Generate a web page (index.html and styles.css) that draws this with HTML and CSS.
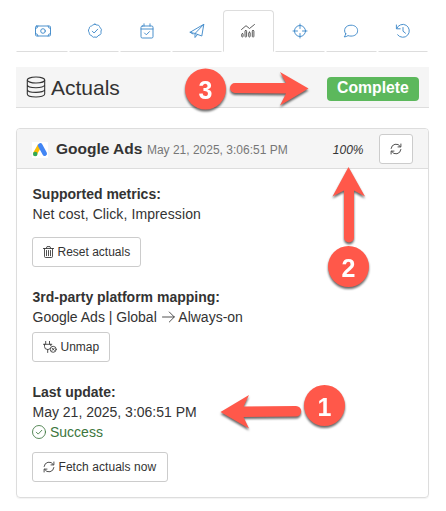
FILE: index.html
```html
<!DOCTYPE html>
<html lang="en">
<head>
    <meta charset="UTF-8">
    <meta name="viewport" content="width=device-width, initial-scale=1.0">
    <title>Actuals</title>
    <link rel="stylesheet" href="styles.css">
</head>
<body>
    <ul class="tabs">
        <li class="tab tab-wide">
            <svg class="icon" width="18" height="16" viewBox="0 0 18 16"><rect x="1.500" y="3" width="15" height="10" rx="1.200"/><circle cx="9" cy="8" r="2.300"/><path d="M1.500 5.500Q4 5.500 4 3M14 3Q14 5.500 16.500 5.500M1.500 10.500Q4 10.500 4 13M14 13Q14 10.500 16.500 10.500"/></svg>
        </li>
        <li class="tab tab-check">
            <svg class="icon" width="16" height="16" viewBox="0 0 16 16"><path d="M8 1.200Q9 2.300 10.200 2Q12 1.900 12.500 3.500Q12.700 4.800 13.900 5.400Q15 6.800 14 8Q14 9.200 14 10.500Q13.500 12 12 12.200Q10.800 12.700 10.200 13.900Q8.900 14.900 8 13.900Q6.600 14.800 5.600 13.800Q5.100 12.600 3.800 12.300Q2.200 11.700 2.300 10.300Q2.200 9.100 1.500 8.200Q1.200 6.800 2.200 5.700Q2.200 3.900 3.500 3.300Q4.800 3.100 5.600 2.200Q6.900 1.300 8 1.200Z"/><path d="M5.300 8.200L7.100 10L10.700 6.200"/></svg>
        </li>
        <li class="tab tab-check">
            <svg class="icon" width="16" height="16" viewBox="0 0 16 16"><rect x="2" y="3" width="12" height="12" rx="1.300"/><path d="M2 6H14M5 3V.8M11 3V.8M5.500 10L7.300 11.800L10.500 8.600"/></svg>
        </li>
        <li class="tab">
            <svg class="icon" width="16" height="16" viewBox="0 0 16 16"><path d="M1.200 9.200L14.800 1.300L12.800 13L6 10.500ZM14.800 1.300L6 10.500V14.500L8.500 11.500M1.200 9.200L4 11"/></svg>
        </li>
        <li class="tab active">
            <svg class="icon" width="16" height="16" viewBox="0 0 16 16"><path d="M1.500 6.500L6 2.700L9.500 5.500L14.500 1.500"/><rect x="1.700" y="10.500" width="1.400" height="3.500" rx=".7"/><rect x="5" y="7.500" width="1.600" height="6.500" rx=".7"/><rect x="8.700" y="9.200" width="1.500" height="4.800" rx=".7"/><rect x="12.300" y="7.500" width="1.600" height="6.500" rx=".7"/></svg>
        </li>
        <li class="tab">
            <svg class="icon" width="16" height="16" viewBox="0 0 16 16"><circle cx="8" cy="8" r="5.500"/><path d="M8 1V5.500M8 10.500V15M1 8H5.500M10.500 8H15"/></svg>
        </li>
        <li class="tab">
            <svg class="icon" width="16" height="16" viewBox="0 0 16 16"><path d="M2.700 10.800C-.2 7 2.500 2.200 8 2.200C12 2.200 14.600 4.500 14.600 7.700C14.600 11 12 13.100 8 13.100C6.900 13.100 5.900 12.900 5 12.600Q3.300 13.900 1.200 13.900Q2.400 12.600 2.700 10.800Z"/></svg>
        </li>
        <li class="tab">
            <svg class="icon" width="16" height="16" viewBox="0 0 16 16"><path d="M1.400 2V5.800H5.200M1.700 5.500A6.500 6.500 0 1 1 2.600 11.800M8 4.500V8.200L10.500 10.200"/></svg>
        </li>
    </ul>

    <div class="page-bar">
        <svg class="icon icon-db" width="20" height="22" viewBox="0 0 20 22"><ellipse cx="10" cy="4" rx="8.700" ry="3"/><path d="M1.300 4V18C1.300 22 18.700 22 18.700 18V4M1.300 8.800C1.300 12.800 18.700 12.800 18.700 8.800M1.300 13.400C1.300 17.400 18.700 17.400 18.700 13.400"/></svg>
        <h1>Actuals</h1>
        <span class="label">Complete</span>
    </div>

    <div class="panel">
        <div class="panel-heading">
            <svg class="ads-logo" width="16" height="16" viewBox="0 0 16 16"><rect width="16" height="16" fill="#fff"/><path d="M7.700 3.500L3 11.800" stroke="#fbbc04" stroke-width="4.200"/><path d="M8.200 3.400L12.700 11.700" stroke="#4285f4" stroke-width="4.600" stroke-linecap="round"/><circle cx="3.200" cy="12" r="2.300" fill="#34a853"/></svg>
            <h2>Google Ads</h2>
            <small>May 21, 2025, 3:06:51 PM</small>
            <em>100%</em>
            <button class="btn" aria-label="Refresh">
                <svg class="icon" width="12" height="12" viewBox="0 0 12 12"><path d="M1.100 5.500A5 5 0 0 1 10.300 3.500M10.900 1V3.900H8M10.900 6.500A5 5 0 0 1 1.700 8.500M1.100 11V8.100H4"/></svg>
            </button>
        </div>
        <div class="panel-body">
            <div class="block metrics">
                <strong>Supported metrics:</strong>
                <p class="spaced">Net cost, Click, Impression</p>
                <button class="btn">
                    <svg class="icon" width="11" height="12" viewBox="0 0 11 12"><path d="M.3 2.500H10.700M3.300 2.300L4 .6H7L7.700 2.300M1.500 2.500V10.400Q1.500 11.500 2.600 11.500H8.400Q9.500 11.500 9.500 10.400V2.500M3.500 4.500V9.700M5.500 4.500V9.700M7.500 4.500V9.700"/></svg>
                    Reset actuals
                </button>
            </div>
            <div class="block mapping">
                <strong>3rd-party platform mapping:</strong>
                <p>Google Ads | Global <svg class="icon icon-arrow" width="13" height="12" viewBox="0 0 13 12"><path d="M.5 6H12.300M7.300 1L12.300 6L7.300 11"/></svg> Always-on</p>
                <button class="btn">
                    <svg class="icon" width="14" height="12" viewBox="0 0 14 12"><path d="M2.700 .3V3M6.500 .3V3M.5 3.300H8.800M1.500 3.300V5.500Q1.500 8.500 4.700 8.500Q6 8.500 6.600 7.800M4.700 8.500V11.500M7.800 4.700V3.300"/><circle cx="10.200" cy="8.300" r="3"/><path d="M9.100 7.200L11.300 9.400M11.300 7.200L9.100 9.400"/></svg>
                    Unmap
                </button>
            </div>
            <div class="block update">
                <strong>Last update:</strong>
                <p>May 21, 2025, 3:06:51 PM</p>
                <p class="success"><svg class="icon" width="14" height="14" viewBox="0 0 14 14"><circle cx="7" cy="7" r="6.500"/><path d="M4.300 7.200L6.200 9.100L9.800 5.300"/></svg> Success</p>
                <button class="btn">
                    <svg class="icon" width="12" height="12" viewBox="0 0 12 12"><path d="M1.100 5.500A5 5 0 0 1 10.300 3.500M10.900 1V3.900H8M10.900 6.500A5 5 0 0 1 1.700 8.500M1.100 11V8.100H4"/></svg>
                    Fetch actuals now
                </button>
            </div>
        </div>
    </div>

    <!-- numbered callouts over the page -->
    <svg class="callouts" width="446" height="511" viewBox="0 0 446 511">
        <g class="callout">
            <path d="M235 83L286 83L280 72L308.500 88.500L280 105.500L286 93.500L235 93A5 5 0 0 1 235 83Z"/>
            <circle cx="205.500" cy="89" r="20.500"/>
            <text x="205.500" y="98.500">3</text>
        </g>
        <g class="callout">
            <path d="M344 237.500L344 190.500L332.500 196.500L348.500 167L365 196.500L354 190.500L354 237.500A5 5 0 0 1 344 237.500Z"/>
            <circle cx="348.500" cy="266.500" r="20.500"/>
            <text x="348.500" y="276.500">2</text>
        </g>
        <g class="callout">
            <path d="M296 406L243.500 406.500L249 395L220.500 412L249 428.500L243.500 417L296 416.500A5.200 5.200 0 0 0 296 406Z"/>
            <circle cx="324.500" cy="405.500" r="20.500"/>
            <text x="324.500" y="415.500">1</text>
        </g>
    </svg>
</body>
</html>
```

FILE: styles.css
```css
* { box-sizing: border-box; }
body { position: relative; width: 446px; height: 511px; margin: 0; padding: 10px 17px 0 16px; font: 14px/20px "Liberation Sans", Arial, sans-serif; color: #333; background: #fff; overflow: hidden; }
h1, h2, p { margin: 0; }

.icon { flex: none; fill: none; stroke: currentColor; stroke-width: .85; stroke-linecap: round; stroke-linejoin: round; }

.tabs { display: flex; gap: 1px; width: 412px; height: 42px; margin: 0; padding: 0; list-style: none; color: #428bca; }
.tabs .icon { stroke-width: .95; }
.tab { flex: 1; display: flex; align-items: center; justify-content: center; border: 1px solid transparent; border-bottom-color: #ddd; }
.tab-wide { flex: 0 0 52px; padding-left: 2px; }
.tab-check .icon { margin-left: 2px; }
.tab.active { border-color: #ddd; border-bottom-color: transparent; border-radius: 4px 4px 0 0; color: #555; }

.page-bar { display: flex; align-items: center; height: 41px; margin-top: 15px; padding: 0 10px; background: #f5f5f5; border-bottom: 1px solid #ddd; }
.page-bar h1 { margin-left: 5px; padding-top: 1px; font-size: 21px; font-weight: normal; }
.icon-db { stroke-width: 1.1; }
.label { width: 92px; height: 24px; margin: 3px 0 0 auto; border-radius: 4px; background: #5cb85c; color: #fff; font-size: 15.75px; font-weight: bold; line-height: 22px; text-align: center; }

.panel { height: 370px; margin-top: 20px; border: 1px solid #ddd; border-radius: 4px; box-shadow: 0 1px 1px rgba(0,0,0,.05); }
.panel-heading { display: flex; align-items: center; height: 40px; padding: 0 15px; background: #f5f5f5; border-bottom: 1px solid #ddd; border-radius: 3px 3px 0 0; }
.panel-heading h2 { margin-left: 8px; font-size: 15.5px; font-weight: bold; }
.panel-heading small { margin: 2px 0 0 4.5px; font-size: 12px; color: #777; }
.panel-heading em { margin: 2px 15.5px 0 auto; font-size: 12px; }
.ads-logo { margin-top: 2px; }

.btn { display: flex; align-items: center; gap: 3.5px; height: 30px; padding: 0 10px; border: 1px solid #ccc; border-radius: 3px; background: #fff; color: #333; font: 12px/18px "Liberation Sans", Arial, sans-serif; white-space: nowrap; }
.panel-body { padding: 15px; }
.block { height: 103px; }
.block strong, .block p { padding-left: .5px; }
.block strong { display: block; }
.block .spaced { letter-spacing: .1px; }
.mapping { height: 95px; }
.metrics .btn { margin-top: 13px; }
.mapping .btn { margin-top: 5px; }
.update .btn { width: 136px; margin-top: 10px; letter-spacing: .06px; }
.icon-arrow { vertical-align: -1px; margin: 0 .5px 0 1px; }
.block .success { display: flex; align-items: center; gap: 4px; padding-left: 0; color: #3c763d; }

.callouts { position: absolute; left: 0; top: 0; pointer-events: none; }
.callout { fill: #ff584a; filter: drop-shadow(0 2px 1px rgba(0,0,0,.6)); }
.callout text { fill: #fff; font-size: 25px; font-weight: bold; text-anchor: middle; }
```
